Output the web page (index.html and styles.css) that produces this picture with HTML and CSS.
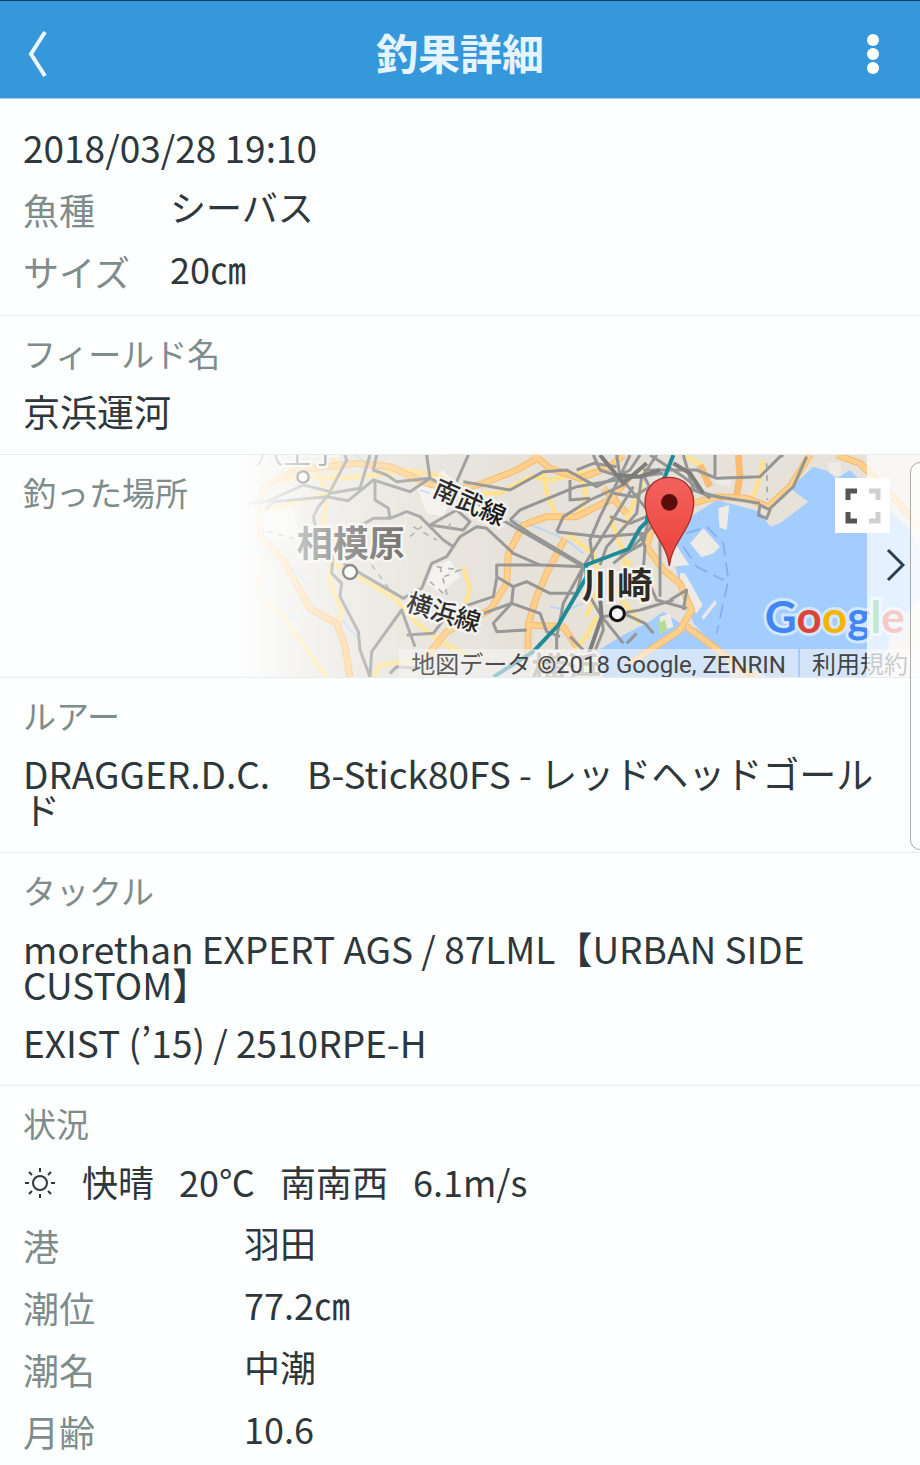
FILE: index.html
```
<!DOCTYPE html>
<html lang="ja">
<head>
    <meta charset="UTF-8">
    <meta name="viewport" content="width=device-width, initial-scale=1.0">
    <title>釣果詳細</title>
    <link rel="stylesheet" href="styles.css">
</head>
<body>
    <header class="header">
        <button class="icon-btn" type="button" aria-label="戻る">
            <svg width="24" height="48" viewBox="0 0 24 48"><path d="M21 2 L7 24 L21 46" fill="none" stroke="#eef8ff" stroke-width="4"/></svg>
        </button>
        <h1 class="title">釣果詳細</h1>
        <button class="icon-btn" type="button" aria-label="メニュー">
            <svg width="14" height="40" viewBox="0 0 14 40" fill="#fff"><circle cx="7" cy="6" r="6"/><circle cx="7" cy="20" r="6"/><circle cx="7" cy="34" r="6"/></svg>
        </button>
    </header>

    <main>
        <section class="section summary">
            <p class="value">2018/03/28 19:10</p>
            <dl class="rows">
                <div class="row"><dt>魚種</dt><dd>シーバス</dd></div>
                <div class="row"><dt>サイズ</dt><dd>20㎝</dd></div>
            </dl>
        </section>

        <section class="section">
            <h2 class="label">フィールド名</h2>
            <p class="value">京浜運河</p>
        </section>

        <section class="section place">
            <h2 class="label">釣った場所</h2>
            <div class="map">
                <svg class="map-canvas" viewBox="0 15 2070 666" preserveAspectRatio="xMaxYMid slice">
                    <rect y="15" width="2070" height="666" fill="#e6e2da"/>

                    <!-- parks and open ground -->
                    <g fill="#f3f1ec">
                        <path d="M560 110 L640 60 L680 110 L640 200 L590 190 Z"/>
                        <path d="M610 350 L660 330 L690 380 L630 430 L590 400 Z"/>
                        <path d="M80 180 L190 170 L210 260 L110 270 Z"/>
                    </g>

                    <!-- Tokyo bay -->
                    <g fill="#a3ccff">
                        <path d="M1340 250 L1390 195 L1460 150 L1590 185 L1620 230 L1650 220 L1735 155 L1680 115 L1750 50 L1790 62 L1820 85 L1860 60 L1910 110 L2040 240 L2070 300 L2070 440 L1980 560 L1960 681 L1610 681 L1460 590 L1390 520 L1350 400 L1330 330 Z"/>
                        <path d="M1090 610 L1180 555 L1250 520 L1300 485 L1350 520 L1400 535 L1480 600 L1500 681 L1090 681 Z"/>
                    </g>
                    <g fill="#eeebe6">
                        <path d="M1380 280 L1420 235 L1470 290 L1450 310 L1415 322 Z"/>
                        <path d="M1465 175 L1498 165 L1490 240 L1468 232 Z"/>
                        <path d="M1350 370 L1365 370 L1418 465 L1400 490 L1350 450 Z"/>
                        <path d="M1415 500 L1455 450 L1460 460 L1420 510 Z"/>
                        <path d="M1335 280 L1378 345 L1320 350 Z"/>
                        <path d="M1790 40 L1830 35 L1835 78 L1800 70 Z"/>
                        <path d="M1450 70 L1505 90 L1500 110 L1455 100 Z"/>
                        <path d="M1290 500 L1320 490 L1330 530 L1290 545 Z"/>
                    </g>
                    <path d="M1284 520 L1305 510 L1312 540 L1290 552 Z" fill="#b5dc92"/>

                    <!-- rivers -->
                    <g fill="none" stroke="#b9d5f7" stroke-width="5">
                        <path d="M370 10 L430 55 L510 100 M570 120 L600 130 M850 210 L930 235 L1010 270 L1060 310"/>
                        <path d="M60 290 L120 310 M185 350 L235 405 M150 495 L210 505 M335 510 L380 560 M960 470 L1010 480 L1060 460"/>
                    </g>

                    <!-- minor roads -->
                    <g fill="none" stroke="#ffe28f" stroke-width="14" stroke-linejoin="round">
                        <path d="M260 60 L290 130 L280 220 L305 330 L300 400 L335 480 L325 520"/>
                        <path d="M110 100 L240 80 L330 85 L440 75 L520 60 L620 75 L720 130 L810 130"/>
                        <path d="M310 340 L420 400 L500 450 L560 520 L640 580 L720 620"/>
                        <path d="M85 370 L90 440 L160 500 L210 570 L290 681"/>
                        <path d="M310 15 L320 60 L300 130 L80 190"/>
                        <path d="M430 681 L450 645 L560 630"/>
                        <path d="M940 60 L950 130 L980 200"/>
                        <path d="M1050 60 L1070 150 L1040 190 M1010 250 L1090 310 L1110 400 L1070 500"/>
                        <path d="M1030 600 L1070 560 L1100 500 M1250 40 L1230 120 L1180 230"/>
                        <path d="M1600 30 L1590 80 L1570 140 M1200 330 L1160 430 L1230 520"/>
                        <path d="M700 350 L720 420 L700 480 M1360 15 L1420 50"/>
                        <path d="M810 130 L900 80 L960 90 L1100 60 M1140 200 L1180 310 L1190 400"/>
                    </g>

                    <!-- highways -->
                    <g fill="none" stroke-linejoin="round" stroke="#f8bd72" stroke-width="21">
                        <path d="M80 180 L100 110 L200 60 L380 40 L480 50 L590 100 L680 120 L760 100 L860 60 L930 20"/>
                        <path d="M85 200 L95 265 L160 330 L240 475 L320 520 L345 590 L360 681"/>
                        <path d="M590 620 L650 545 L780 480 L830 400 L835 310 L880 225 L950 200 L1040 200 L1140 150 L1200 80"/>
                        <path d="M1005 265 L950 370 L920 440 L895 520 L893 620"/>
                        <path d="M893 525 L1000 530 L1040 590"/>
                        <path d="M910 15 L960 55 L1050 85 L1140 50 L1180 15"/>
                        <path d="M1120 115 L1190 190 M1270 110 L1275 200 L1250 290 L1300 360 L1350 400 L1385 480 L1350 540 L1200 640"/>
                        <path d="M1370 165 L1460 140 L1550 145 L1615 170 L1680 110 L1740 15"/>
                        <path d="M1525 15 L1530 80 L1520 135 M1410 45 L1440 110"/>
                        <path d="M1370 530 L1450 590 L1570 681"/>
                        <path d="M1820 15 L1890 40 L1960 110 L2070 230"/>
                    </g>
                    <g fill="none" stroke-linejoin="round" stroke="#ffd08c" stroke-width="14">
                        <path d="M80 180 L100 110 L200 60 L380 40 L480 50 L590 100 L680 120 L760 100 L860 60 L930 20"/>
                        <path d="M85 200 L95 265 L160 330 L240 475 L320 520 L345 590 L360 681"/>
                        <path d="M590 620 L650 545 L780 480 L830 400 L835 310 L880 225 L950 200 L1040 200 L1140 150 L1200 80"/>
                        <path d="M1005 265 L950 370 L920 440 L895 520 L893 620 M893 525 L1000 530 L1040 590"/>
                        <path d="M910 15 L960 55 L1050 85 L1140 50 L1180 15"/>
                        <path d="M1120 115 L1190 190 M1270 110 L1275 200 L1250 290 L1300 360 L1350 400 L1385 480 L1350 540 L1200 640"/>
                        <path d="M1370 165 L1460 140 L1550 145 L1615 170 L1680 110 L1740 15"/>
                        <path d="M1370 530 L1450 590 L1570 681 M1820 15 L1890 40 L1960 110 L2070 230"/>
                    </g>

                    <!-- railways -->
                    <g fill="none" stroke="#969696" stroke-width="9" stroke-linejoin="round">
                        <path d="M20 165 L110 155 L220 105 L300 125 L350 30 L345 15"/>
                        <path d="M105 180 L130 155 L290 140 L355 152 L430 90 L540 125 L600 85 L620 95"/>
                        <path d="M250 200 L265 170 L300 130 L390 115 L420 15 M440 15 L430 60 L470 75 L500 95 L600 85 L590 15"/>
                        <path d="M250 200 L260 250 L310 300 L305 370 L335 400 L330 440 L385 545 L390 600 L420 681"/>
                        <path d="M420 681 L425 605 L515 480 L555 590 M530 555 L610 550 L640 510"/>
                        <path d="M340 340 L520 445 L575 415 L605 340 L650 320 L670 290 L640 270 L570 200 L530 185 L480 205 L430 205 L395 225"/>
                        <path d="M435 90 L435 150 L475 175 L480 205 M600 225 L680 180 L720 215 L700 240 L600 225"/>
                        <path d="M670 290 L690 260 L740 230 L770 235 L850 310 L930 345 L1065 350"/>
                        <path d="M620 95 L700 130 L800 200 L1060 350 L1210 110"/>
                        <path d="M680 95 L715 15 M700 95 L840 120 L940 65 L1010 60 L1100 110 L1200 60 L1230 15"/>
                        <path d="M840 210 L870 180 L1040 110 L1190 85 L1300 70"/>
                        <path d="M840 210 L900 250 L1060 345 M1020 90 L1020 150 L1080 145"/>
                        <path d="M1060 350 L1000 460 L980 560 L980 600 M1060 350 L1040 430 L960 430 L890 395 L850 410 L800 380 L800 345 L930 345"/>
                        <path d="M850 410 L845 460 L930 490 L950 545 L990 560 M845 460 L790 520 L800 545 L890 540"/>
                        <path d="M800 385 L790 440 L700 470 M845 460 L760 490"/>
                        <path d="M980 245 L1000 200 L1080 150 L1190 100 M980 245 L1110 260 L1250 250"/>
                        <path d="M1090 340 L1080 270 L1110 200 L1170 80 L1160 15 M1110 345 L1130 290 L1220 190 L1235 80"/>
                        <path d="M1200 15 L1170 80 L1260 190 L1240 280 L1170 320 M1280 15 L1240 75 L1300 190"/>
                        <path d="M1075 370 L1080 440 L1115 500 L1120 540 L1080 640 M1120 500 L1230 480 L1330 450"/>
                        <path d="M1225 240 L1245 290 L1240 360 L1280 450 L1370 475 M1150 340 L1200 300 L1265 230 M1255 210 L1290 260 L1290 440"/>
                        <path d="M1120 505 L1180 580 M1180 490 L1245 520 L1270 550 M1320 450 L1370 420 L1360 480"/>
                        <path d="M1260 15 L1360 80 L1440 145 M1240 60 L1400 60 L1460 85 L1590 80 L1650 20 L1660 15"/>
                        <path d="M1455 15 L1455 80 M1360 15 L1390 120 L1480 145 M1590 165 L1620 180 L1610 205 L1585 195 Z"/>
                        <path d="M1615 180 L1690 110 L1730 20 M1340 100 L1430 135 L1590 160"/>
                        <path d="M480 670 L500 650 L560 655 M1020 560 L1060 600 M1190 580 L1220 550"/>
                        <path d="M1090 15 L1110 60 L1170 80 M1040 60 L1090 40 L1160 50 M1140 200 L1200 220 L1250 200 M1150 130 L1210 140 L1260 110"/>
                    </g>
                    <g fill="none" stroke="#7d7d7d" stroke-width="12">
                        <path d="M1110 15 L1160 75 L1230 80 L1290 60 M1160 75 L1180 100 L1250 40 M1330 40 L1380 70 L1420 130"/>
                        <path d="M1110 440 L1115 500 L1070 630"/>
                    </g>
                    <g fill="none" stroke="#a5a5a5" stroke-width="5" stroke-dasharray="17 18">
                        <path d="M550 230 L620 270 M540 260 L575 230 M425 345 L480 420 M600 395 L640 430 M620 350 L690 360 L630 385 M660 220 L655 245 M110 245 L190 265"/>
                        <path d="M1610 40 L1612 150 M630 350 L655 450"/>
                    </g>
                    <path d="M1360 290 L1400 350 L1480 390 M1370 250 L1430 230 L1480 280 L1495 390 L1460 550" fill="none" stroke="#81adf0" stroke-width="5" stroke-dasharray="42 22"/>

                    <!-- shinkansen line -->
                    <path d="M790 681 L910 605 L985 525 L1070 380 L1068 345 L1195 297 L1230 235 L1250 215 L1262 140 L1305 80 L1330 15" fill="none" stroke="#1f8b96" stroke-width="12"/>

                    <!-- place names -->
                    <g class="map-text">
                        <text x="76" y="42" font-size="84" fill="#666">八王子</text>
                        <text x="200" y="320" font-size="108" font-weight="700" fill="#4c4a47">相模原</text>
                        <text x="1056" y="444" font-size="106" font-weight="700" fill="#2e2a25">川崎</text>
                        <text font-size="76" font-weight="500" fill="#111" transform="translate(604 136) rotate(24)">南武線</text>
                        <text font-size="76" font-weight="500" fill="#111" transform="translate(524 480) rotate(17)">横浜線</text>
                        <text x="904" y="696" font-size="104" font-weight="700" fill="#a19d97">横浜</text>
                    </g>
                    <g fill="#f6f6f6" stroke="#3c3c3c" stroke-width="7">
                        <circle cx="219" cy="81" r="17"/>
                        <circle cx="360" cy="366" r="21"/>
                        <circle cx="1162" cy="491" r="21" stroke="#111" stroke-width="9"/>
                    </g>

                    <!-- pin -->
                    <path d="M1318 348 C1312 275 1245 235 1245 157 C1245 110 1278 82 1318 82 C1358 82 1391 110 1391 157 C1391 235 1324 275 1318 348 Z" fill="url(#pin)" stroke="#a92e29" stroke-width="4"/>
                    <circle cx="1318" cy="157" r="25" fill="#5a0d0b"/>
                    <defs>
                        <linearGradient id="pin" x1="0" y1="0" x2="0" y2="1">
                            <stop offset="0" stop-color="#f3625d"/>
                            <stop offset="1" stop-color="#ea4139"/>
                        </linearGradient>
                    </defs>

                    <text class="map-logo" x="1604" y="550"><tspan fill="#4285f4">G</tspan><tspan fill="#db4437">o</tspan><tspan fill="#f4b400">o</tspan><tspan fill="#4285f4">g</tspan><tspan fill="#34a853">l</tspan><tspan fill="#db4437">e</tspan></text>
                </svg>
                <button class="expand" type="button" aria-label="全画面表示">
                    <svg width="36" height="36" viewBox="0 0 36 36"><path d="M3 12 V3 H12 M24 3 H33 V12 M33 24 V33 H24 M12 33 H3 V24" fill="none" stroke="#555" stroke-width="5"/></svg>
                </button>
                <div class="credit">
                    <span>地図データ ©2018 Google, ZENRIN</span>
                    <a href="#terms">利用規約</a>
                </div>
                <div class="map-fade"></div>
                <a class="map-next" href="#map" aria-label="地図を開く">
                    <svg width="20" height="34" viewBox="0 0 20 34"><path d="M3 2 L18 17 L3 32" fill="none" stroke="#2c3e50" stroke-width="3"/></svg>
                </a>
            </div>
        </section>

        <section class="section">
            <h2 class="label">ルアー</h2>
            <p class="value">DRAGGER.D.C.　B-Stick80FS - レッドヘッドゴールド</p>
        </section>

        <section class="section">
            <h2 class="label">タックル</h2>
            <p class="value">morethan EXPERT AGS / 87LML【URBAN SIDE CUSTOM】</p>
            <p class="value">EXIST (’15) / 2510RPE-H</p>
        </section>

        <section class="section condition">
            <h2 class="label">状況</h2>
            <div class="weather">
                <svg width="34" height="34" viewBox="0 0 34 34" fill="none" stroke="#2d373c" stroke-width="2">
                    <circle cx="17" cy="19" r="7"/>
                    <path d="M17 4 V8 M17 30 V34 M2 19 H6 M28 19 H32 M6 8 L9 11 M25 27 L28 30 M28 8 L25 11 M9 27 L6 30"/>
                </svg>
                <span>快晴</span>
                <span>20℃</span>
                <span>南南西</span>
                <span>6.1m/s</span>
            </div>
            <dl class="rows">
                <div class="row"><dt>港</dt><dd>羽田</dd></div>
                <div class="row"><dt>潮位</dt><dd>77.2㎝</dd></div>
                <div class="row"><dt>潮名</dt><dd>中潮</dd></div>
                <div class="row"><dt>月齢</dt><dd>10.6</dd></div>
            </dl>
        </section>
    </main>

    <div class="edge-handle"></div>
</body>
</html>
```
FILE: styles.css
```
* {
    box-sizing: border-box;
}
body {
    margin: 0;
    position: relative;
    overflow-x: hidden;
    background: #fdfefe;
    color: #2d373c;
    font-family: "Noto Sans CJK JP", sans-serif;
    font-size: 36px;
    line-height: 36px;
}
h1, h2, p, dl, dd {
    margin: 0;
}
.header {
    display: flex;
    align-items: center;
    justify-content: space-between;
    height: 99px;
    padding: 8px 24px 0;
    background: #3598db;
    border-top: 1px solid #123a5e;
    border-bottom: 1px solid #a5cdea;
}
.icon-btn {
    display: flex;
    align-items: center;
    justify-content: center;
    width: 46px;
    height: 60px;
    padding: 0;
    border: none;
    background: none;
}
.icon-btn:first-child {
    justify-content: flex-start;
}
.title {
    padding-bottom: 4px;
    font-size: 42px;
    line-height: 60px;
    font-weight: bold;
    color: #e6f4ff;
}
.section {
    display: flex;
    flex-direction: column;
    gap: 22px;
    padding: 19px 23px 25px;
    border-bottom: 1px solid #e8ebeb;
}
.label {
    font-size: 33px;
    font-weight: normal;
    color: #7f8c8c;
}
.value {
    font-size: 37px;
}
.summary {
    gap: 13px;
    padding: 30px 23px 13px;
}
.row {
    display: flex;
    height: 62px;
    line-height: 56px;
}
.row dt {
    width: 147px;
    padding-top: 3px;
    color: #7f8c8c;
}
.place {
    position: relative;
    height: 223px;
    overflow: hidden;
}
.map {
    position: absolute;
    top: 0;
    right: 0;
    bottom: 0;
    width: 75%;
}
.map-canvas {
    display: block;
    width: 100%;
    height: 100%;
}
.map-text {
    font-family: "Noto Sans CJK JP", sans-serif;
    paint-order: stroke;
    stroke: #f4f2ee;
    stroke-width: 14px;
}
.map-logo {
    font-family: Lato, sans-serif;
    font-size: 132px;
    font-weight: bold;
    paint-order: stroke;
    stroke: #d3e6ff;
    stroke-width: 18px;
}
.expand {
    position: absolute;
    top: 23px;
    right: 30px;
    display: flex;
    align-items: center;
    justify-content: center;
    width: 55px;
    height: 55px;
    padding: 0;
    border: none;
    background: #fff;
}
.credit {
    position: absolute;
    right: 0;
    bottom: 0;
    display: flex;
    gap: 2px;
    font-family: Roboto, "Noto Sans CJK JP", sans-serif;
    font-size: 24px;
    line-height: 28px;
    color: #444;
    white-space: nowrap;
}
.credit span,
.credit a {
    height: 28px;
    padding: 2px 12px 0;
    background: rgba(245, 245, 245, 0.6);
    color: inherit;
    text-decoration: none;
}
.map-fade {
    position: absolute;
    inset: 0;
    background:
        linear-gradient(to left, rgba(255, 255, 255, 0.72) 53px, rgba(255, 255, 255, 0) 53px),
        linear-gradient(to right, #fdfefe 8px, rgba(253, 254, 254, 0.45) 110px, rgba(253, 254, 254, 0.15) 200px, rgba(253, 254, 254, 0) 290px);
}
.map-next {
    position: absolute;
    top: 93px;
    right: 15px;
    display: flex;
}
.weather {
    display: flex;
    align-items: center;
    gap: 25px;
}
.condition {
    padding-bottom: 0;
    border-bottom: none;
}
.condition .rows {
    margin-top: -7px;
}
.condition dt {
    width: 221px;
}
.edge-handle {
    position: absolute;
    top: 462px;
    right: -10px;
    width: 20px;
    height: 388px;
    border: 1px solid #aaa;
    border-radius: 12px;
    background: rgba(255, 255, 255, 0.6);
}
```
